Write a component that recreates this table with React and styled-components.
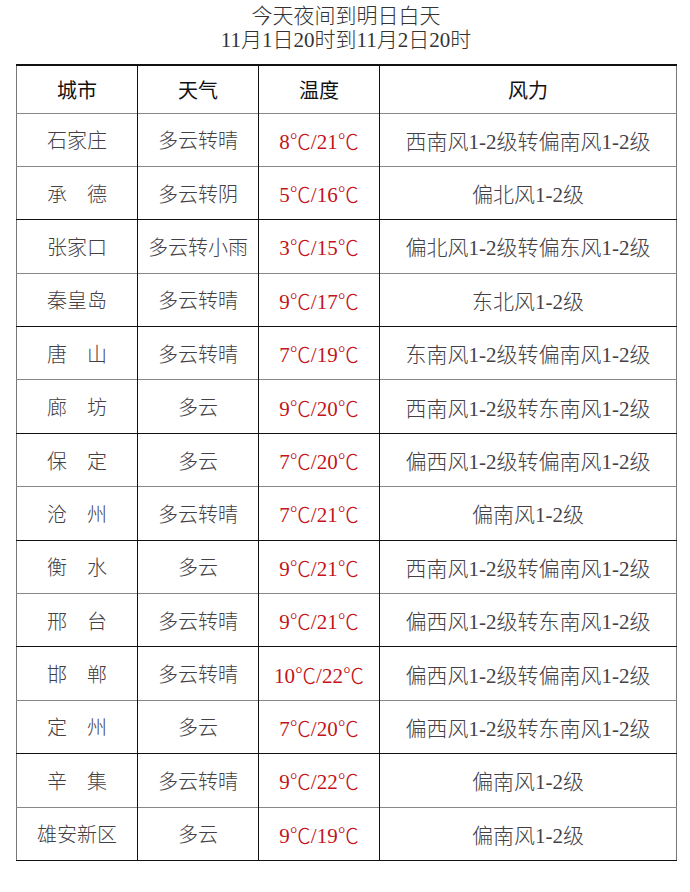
import React from 'react';
import styled, { createGlobalStyle } from 'styled-components';

const GlobalStyle = createGlobalStyle`
  html, body {
    margin: 0;
    padding: 0;
    background: #fff;
  }
  body {
    font-family: "Liberation Serif", "Noto Sans CJK SC", serif;
    color: #3c3c3c;
  }
`;

const Page = styled.div`
  width: 690px;
  height: 892px;
  padding: 4px 0 0 16px;
  box-sizing: border-box;
`;

const Title = styled.h1`
  width: 660px;
  margin: 0;
  text-align: center;
  font-family: "Liberation Serif", "Noto Sans CJK SC", serif;
  font-weight: 300;
  font-size: 21px;
  line-height: 24px;
  color: #333;
`;

const Table = styled.table`
  margin-top: 12px;
  width: 661px;
  border-collapse: collapse;
  table-layout: fixed;
  border-top: 2px solid #111;
  border-left: 1px solid #777;
  border-right: 1px solid #777;
  border-bottom: 1px solid #777;
`;

const Row = styled.tr`
  height: ${(p) => (p.$head ? '48px' : '53.4px')};
  border-bottom: 1px solid ${(p) => (p.$dark ? '#111' : '#888')};
`;

const Cell = styled.td`
  padding: 0;
  text-align: center;
  vertical-align: middle;
  font-family: "Liberation Serif", "Noto Sans CJK SC", serif;
  font-size: ${(p) => (p.$temp || p.$wide ? '21px' : '20px')};
  font-weight: ${(p) => (p.$head ? 400 : 300)};
  color: ${(p) => (p.$head ? '#111' : p.$temp ? '#c4131b' : '#434046')};
  border-right: 1px solid #111;
  &:last-child {
    border-right: none;
  }
`;

const rows = [
  ['石家庄', '多云转晴', '8℃/21℃', '西南风1-2级转偏南风1-2级'],
  ['承　德', '多云转阴', '5℃/16℃', '偏北风1-2级'],
  ['张家口', '多云转小雨', '3℃/15℃', '偏北风1-2级转偏东风1-2级'],
  ['秦皇岛', '多云转晴', '9℃/17℃', '东北风1-2级'],
  ['唐　山', '多云转晴', '7℃/19℃', '东南风1-2级转偏南风1-2级'],
  ['廊　坊', '多云', '9℃/20℃', '西南风1-2级转东南风1-2级'],
  ['保　定', '多云', '7℃/20℃', '偏西风1-2级转偏南风1-2级'],
  ['沧　州', '多云转晴', '7℃/21℃', '偏南风1-2级'],
  ['衡　水', '多云', '9℃/21℃', '西南风1-2级转偏南风1-2级'],
  ['邢　台', '多云转晴', '9℃/21℃', '偏西风1-2级转东南风1-2级'],
  ['邯　郸', '多云转晴', '10℃/22℃', '偏西风1-2级转偏南风1-2级'],
  ['定　州', '多云', '7℃/20℃', '偏西风1-2级转东南风1-2级'],
  ['辛　集', '多云转晴', '9℃/22℃', '偏南风1-2级'],
  ['雄安新区', '多云', '9℃/19℃', '偏南风1-2级'],
];

const App = () => (
  <>
    <GlobalStyle />
    <Page>
      <Title>
        今天夜间到明日白天
        <br />
        11月1日20时到11月2日20时
      </Title>
      <Table>
        <colgroup>
          <col style={{ width: '121px' }} />
          <col style={{ width: '121px' }} />
          <col style={{ width: '121px' }} />
          <col />
        </colgroup>
        <tbody>
          <Row $head>
            <Cell $head>城市</Cell>
            <Cell $head>天气</Cell>
            <Cell $head>温度</Cell>
            <Cell $head>风力</Cell>
          </Row>
          {rows.map(([city, weather, temp, wind], i) => (
            <Row key={city} $dark={i % 2 === 1}>
              <Cell>{city}</Cell>
              <Cell>{weather}</Cell>
              <Cell $temp>{temp}</Cell>
              <Cell $wide>{wind}</Cell>
            </Row>
          ))}
        </tbody>
      </Table>
    </Page>
  </>
);

export default App;
